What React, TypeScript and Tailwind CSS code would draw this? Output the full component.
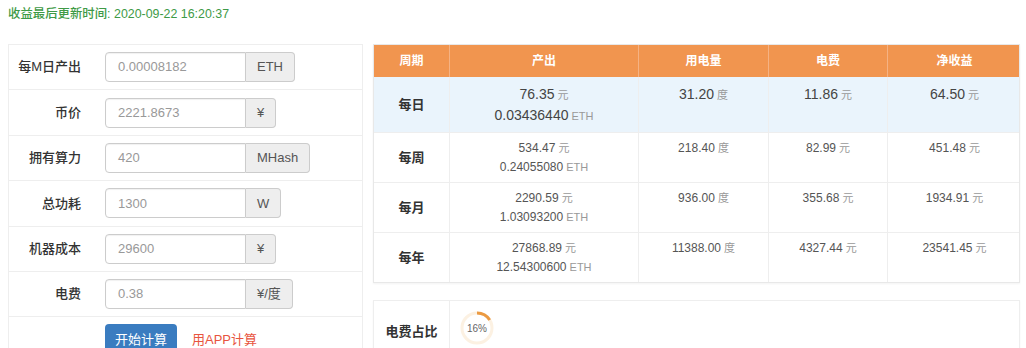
import React from "react";

const font = { fontFamily: '"Liberation Sans", "Noto Sans CJK SC", sans-serif' };

type Field = { label: string; value: string; unit: string };

const fields: Field[] = [
    { label: "每M日产出", value: "0.00008182", unit: "ETH" },
    { label: "币价", value: "2221.8673", unit: "¥" },
    { label: "拥有算力", value: "420", unit: "MHash" },
    { label: "总功耗", value: "1300", unit: "W" },
    { label: "机器成本", value: "29600", unit: "¥" },
    { label: "电费", value: "0.38", unit: "¥/度" },
];

type Row = { period: string; yuan: string; eth: string; kwh: string; fee: string; net: string };

const rows: Row[] = [
    { period: "每日", yuan: "76.35", eth: "0.03436440", kwh: "31.20", fee: "11.86", net: "64.50" },
    { period: "每周", yuan: "534.47", eth: "0.24055080", kwh: "218.40", fee: "82.99", net: "451.48" },
    { period: "每月", yuan: "2290.59", eth: "1.03093200", kwh: "936.00", fee: "355.68", net: "1934.91" },
    { period: "每年", yuan: "27868.89", eth: "12.54300600", kwh: "11388.00", fee: "4327.44", net: "23541.45" },
];

const cols = "grid grid-cols-[76px_189px_130px_119px_133px]";

const Unit = ({ children }: { children: React.ReactNode }) => (
    <span className="text-[11px] text-[#999]"> {children}</span>
);

const Donut = ({ pct }: { pct: number }) => {
    const r = 15;
    const c = 2 * Math.PI * r;
    return (
        <div className="relative w-[36px] h-[36px]">
            <svg width="36" height="36" viewBox="0 0 36 36">
                <circle cx="18" cy="18" r={r} fill="none" stroke="#fcf1e2" strokeWidth="3" />
                <circle
                    cx="18"
                    cy="18"
                    r={r}
                    fill="none"
                    stroke="#eb9a42"
                    strokeWidth="3"
                    strokeDasharray={`${(c * pct) / 100} ${c}`}
                    transform="rotate(-90 18 18)"
                />
            </svg>
            <span className="absolute inset-0 flex items-center justify-center text-[10px] text-[#666]">
                {pct}%
            </span>
        </div>
    );
};

export default function App() {
    return (
        <div className="w-[1026px] h-[348px] overflow-hidden bg-white" style={font}>
            <div className="pl-[8px] pt-[6px] h-[44px] text-[12.4px] leading-[16px] font-medium text-[#3e9a46]">
                收益最后更新时间: 2020-09-22 16:20:37
            </div>
            <div className="flex pl-[8px] gap-[10px]">
                {/* calculator form */}
                <div className="w-[355px] border border-b-0 border-[#eee]">
                    {fields.map((f) => (
                        <div key={f.label} className="flex items-center h-[45.4px] border-b border-[#eee]">
                            <div className="w-[72px] text-right text-[13px] font-medium text-[#333]">{f.label}</div>
                            <div className="flex ml-[24px] h-[30px]">
                                <div className="w-[141px] flex items-center px-[12px] border border-[#ccc] rounded-l-[4px] text-[13px] text-[#999] shadow-[inset_0_1px_1px_rgba(0,0,0,0.06)]">
                                    {f.value}
                                </div>
                                <div className="flex items-center px-[11px] bg-[#eee] border border-l-0 border-[#ccc] rounded-r-[4px] text-[13px] text-[#555]">
                                    {f.unit}
                                </div>
                            </div>
                        </div>
                    ))}
                    <div className="flex items-start pt-[7px] pl-[96px]">
                        <button className="w-[72px] h-[30px] rounded-[4px] bg-[#3a7cc0] text-white text-[13px]">开始计算</button>
                        <span className="ml-[15px] mt-[6px] text-[13px] text-[#e8553f]">用APP计算</span>
                    </div>
                </div>

                {/* results */}
                <div className="w-[647px]">
                    <div className="border border-[#e8e8e8] shadow-[0_1px_2px_rgba(0,0,0,0.05)]">
                        <div className={`${cols} h-[32px] bg-[#f1954f] text-white text-[12px] font-bold`}>
                            {["周期", "产出", "用电量", "电费", "净收益"].map((h, i) => (
                                <div
                                    key={h}
                                    className={`flex items-center justify-center ${i < 4 ? "border-r border-[#f5b283]" : ""}`}
                                >
                                    {h}
                                </div>
                            ))}
                        </div>
                        {rows.map((r, i) => {
                            const first = i === 0;
                            const big = first ? "text-[14px] leading-[20px] text-[#444]" : "text-[12px] leading-[19px] text-[#555]";
                            return (
                                <div
                                    key={r.period}
                                    className={`${cols} ${first ? "h-[55px] bg-[#eaf4fc]" : "h-[50px] bg-white border-t border-[#eee]"}`}
                                >
                                    <div className="flex items-center justify-center border-r border-[#eee] text-[13px] font-bold text-[#333]">
                                        {r.period}
                                    </div>
                                    <div className={`text-center border-r border-[#eee] ${first ? "pt-[7px]" : "pt-[6px]"} ${big}`}>
                                        <div>{r.yuan}<Unit>元</Unit></div>
                                        <div>{r.eth}<Unit>ETH</Unit></div>
                                    </div>
                                    <div className={`text-center border-r border-[#eee] ${first ? "pt-[7px]" : "pt-[6px]"} ${big}`}>
                                        {r.kwh}<Unit>度</Unit>
                                    </div>
                                    <div className={`text-center border-r border-[#eee] ${first ? "pt-[7px]" : "pt-[6px]"} ${big}`}>
                                        {r.fee}<Unit>元</Unit>
                                    </div>
                                    <div className={`text-center ${first ? "pt-[7px]" : "pt-[6px]"} ${big}`}>
                                        {r.net}<Unit>元</Unit>
                                    </div>
                                </div>
                            );
                        })}
                    </div>

                    <div className="mt-[17px] flex h-[64px] border border-[#eee] shadow-[0_1px_2px_rgba(0,0,0,0.04)]">
                        <div className="w-[76px] flex items-center justify-center border-r border-[#eee] text-[13px] font-bold text-[#333]">
                            电费占比
                        </div>
                        <div className="pl-[9px] pt-[9px]">
                            <Donut pct={16} />
                        </div>
                    </div>
                </div>
            </div>
        </div>
    );
}
